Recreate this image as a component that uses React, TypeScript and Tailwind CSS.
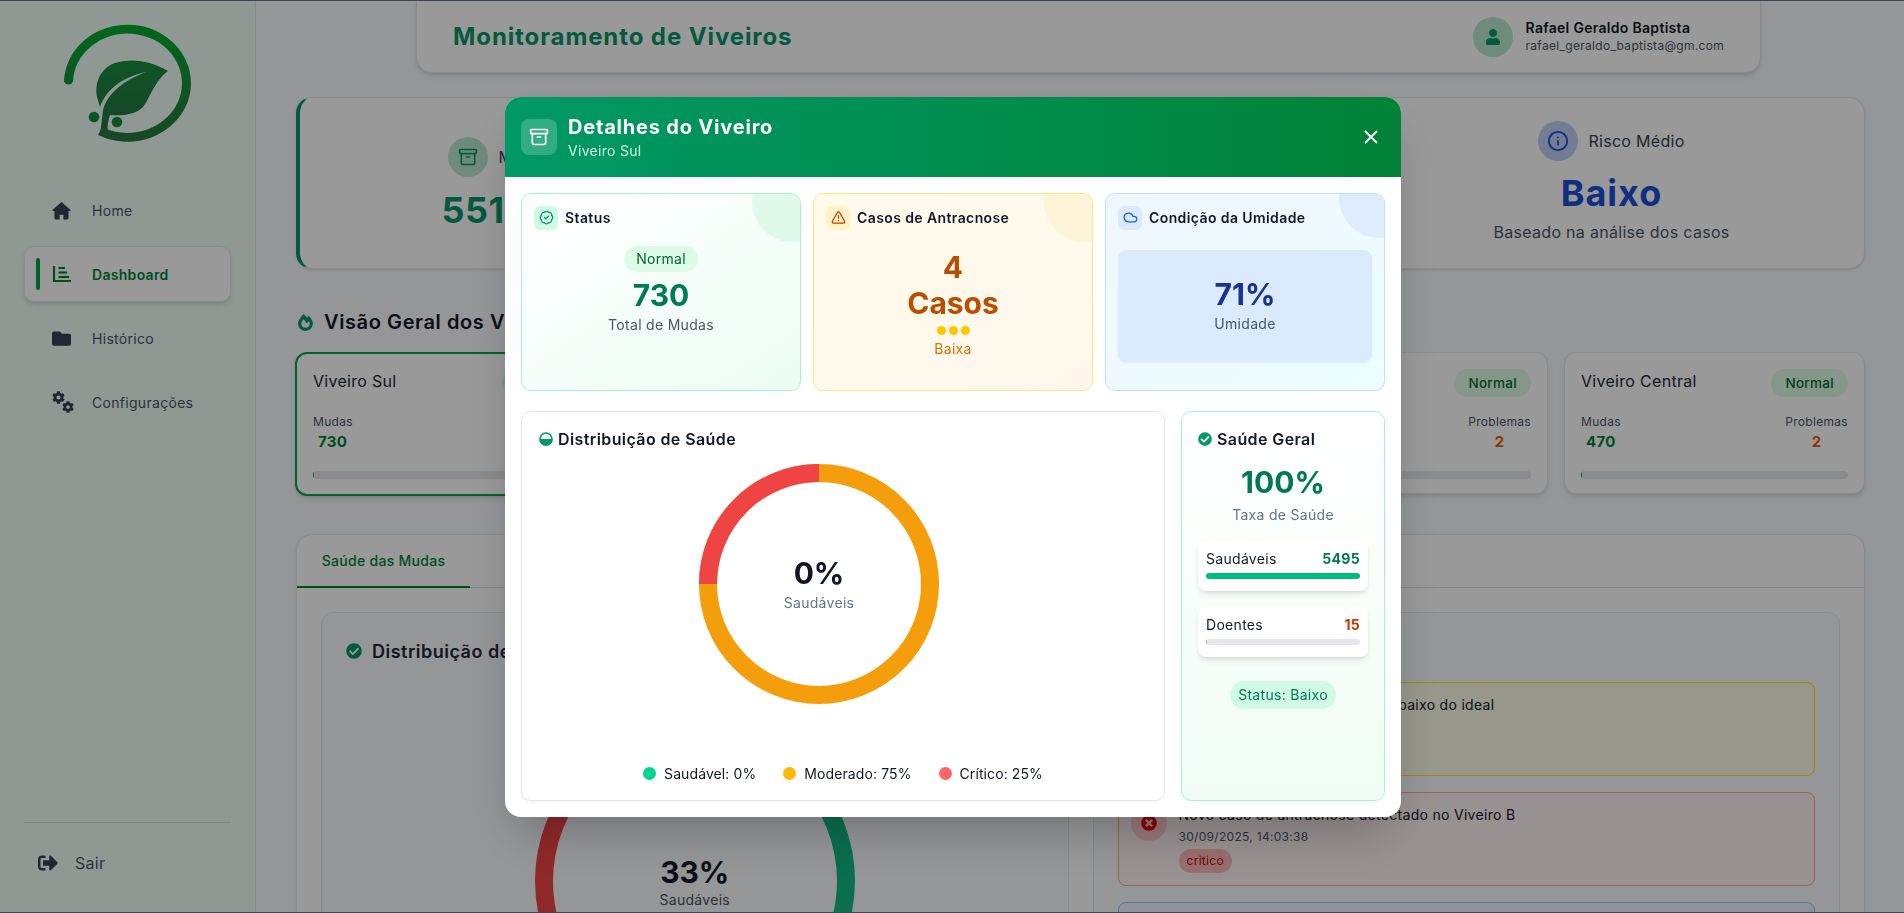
import React from "react";
import { Archive, BadgeCheck, TriangleAlert, Cloud, X, Info } from "lucide-react";
import { FaFolder, FaCog, FaSignOutAlt, FaUser, FaFireAlt, FaCheckCircle, FaTimesCircle } from "react-icons/fa";

function Logo() {
  return (
    <svg width="135" height="125" viewBox="60 22 135 125">
      <defs>
        <linearGradient id="lg" gradientUnits="userSpaceOnUse" x1="127" y1="22" x2="127" y2="145">
          <stop offset="0" stopColor="#00ad2f" />
          <stop offset="1" stopColor="#2a7543" />
        </linearGradient>
        <linearGradient id="lf" gradientUnits="userSpaceOnUse" x1="127" y1="60" x2="127" y2="140">
          <stop offset="0" stopColor="#1a8c41" />
          <stop offset="1" stopColor="#257244" />
        </linearGradient>
      </defs>
      <path d="M68.5 82 A59 54 0 1 1 100 131" fill="none" stroke="url(#lg)" strokeWidth="9" />
      <circle cx="68.5" cy="80" r="4.5" fill="#0a9a36" />
      <path d="M168 71 C150 60 130 58 115 63 C100 68 93 85 98 100 L100 107 C106 90 122 77 146 72 C125 80 108 92 103 110 L100 135 L108 133 C107 127 108 120 110 115 C122 116 135 115 143 107 C150 98 155 80 168 71 Z" fill="url(#lf)" />
      <circle cx="94" cy="117" r="5.3" fill="#118a3c" />
      <circle cx="117" cy="122" r="5.3" fill="#118a3c" />
    </svg>
  );
}

function HomeIcon() {
  return (
    <svg width="19" height="19" viewBox="0 0 20 20" fill="currentColor">
      <path d="M10 1 L19.5 9.6 Q19.8 10.6 18.6 10.6 L17.4 10.6 L17.4 18 Q17.4 19.5 16 19.5 L12 19.5 L12 14.5 L8 14.5 L8 19.5 L4 19.5 Q2.6 19.5 2.6 18 L2.6 10.6 L1.4 10.6 Q0.2 10.6 0.5 9.6 Z" />
    </svg>
  );
}

function ChartIcon() {
  return (
    <svg width="20" height="18" viewBox="0 0 20 18" fill="none" stroke="currentColor" strokeWidth="2.2">
      <path d="M2 1 V16 H19" />
      <path d="M6.5 3 H13" />
      <path d="M6.5 7.5 H15" />
      <path d="M6.5 12 H17" />
    </svg>
  );
}

function GearsIcon() {
  return (
    <svg width="23" height="22" viewBox="0 0 23 22" fill="currentColor">
      <FaCog x={0} y={0} size={13} />
      <FaCog x={10} y={10} size={12} />
    </svg>
  );
}

function NavItem({ icon, label, active }: { icon: React.ReactNode; label: string; active?: boolean }) {
  return (
    <div className={active ? "flex h-[56px] items-center rounded-[10px] border border-gray-200 bg-white/90 pl-[11px] shadow-md" : "flex h-[56px] items-center pl-[12px]"}>
      <div className={active ? "h-[32px] w-[4px] rounded-full bg-[#00a63e]" : "h-[32px] w-[4px]"} />
      <div className={active ? "ml-[12px] flex w-[40px] items-center text-[#008236]" : "ml-[12px] flex w-[40px] items-center text-[#364153]"}>{icon}</div>
      <span className={active ? "text-[14px] font-semibold text-[#008236]" : "text-[14px] text-[#4a5565]"}>{label}</span>
    </div>
  );
}

function ViveiroCard({ name, mudas, problemas, selected }: { name: string; mudas: number; problemas: number; selected?: boolean }) {
  return (
    <div className={selected ? "-ml-[1px] h-[144px] rounded-xl border-2 border-[#00a63e] bg-white pl-[16px] pr-[16px] pt-[15px] shadow-md" : "h-[142px] rounded-xl border border-gray-200 bg-white px-[16px] pt-[16px] shadow-md"}>
      <div className="flex items-start justify-between">
        <span className="text-[16px] leading-[24px] text-[#1e2939]">{name}</span>
        <span className="flex h-[28px] items-center rounded-full bg-[#dcfce7] px-[14px] text-[13.5px] font-medium text-[#016630]">Normal</span>
      </div>
      <div className="mt-[17px] flex justify-between">
        <div>
          <div className="text-[12px] leading-[16px] text-[#4a5565]">Mudas</div>
          <div className="pl-[5px] text-[15px] font-bold leading-[23px] text-[#008236]">{mudas}</div>
        </div>
        <div className="text-center">
          <div className="text-[12px] leading-[16px] text-[#4a5565]">Problemas</div>
          <div className="text-[15px] font-bold leading-[23px] text-[#ea580c]">{problemas}</div>
        </div>
      </div>
      <div className="mt-[18px] h-[8px] overflow-hidden rounded-full bg-[#e5e7eb]">
        <div className="h-full w-[1px] bg-[#00a63e]" />
      </div>
    </div>
  );
}

function Alert({ wrap, circle, inner, title, date, tag, tagClass }: { wrap: string; circle: string; inner: React.ReactNode; title: string; date: string; tag: string; tagClass: string }) {
  return (
    <div className={"flex h-[94px] shrink-0 gap-[12px] rounded-lg border px-[12px] pt-[12px] " + wrap}>
      <div className={"flex h-[36px] w-[36px] shrink-0 items-center justify-center rounded-full " + circle}>{inner}</div>
      <div>
        <div className="text-[14px] leading-[20px] text-[#101828]">{title}</div>
        <div className="mt-[2px] text-[12px] leading-[20px] text-[#4a5565]">{date}</div>
        <span className={"mt-[2px] inline-flex h-[24px] items-center rounded-full px-[8px] text-[12px] " + tagClass}>{tag}</span>
      </div>
    </div>
  );
}

function Background() {
  return (
    <div className="flex h-[913px] w-full overflow-hidden bg-[#f8fafc]">
      <aside className="flex h-full w-[256px] shrink-0 flex-col border-r border-gray-200 bg-[#effdf4]">
        <div className="flex justify-center pt-[22px]"><Logo /></div>
        <nav className="mt-[35px] flex flex-col gap-[8px] px-[24px]">
          <NavItem icon={<HomeIcon />} label="Home" />
          <NavItem active icon={<ChartIcon />} label="Dashboard" />
          <NavItem icon={<FaFolder size={19} />} label="Histórico" />
          <NavItem icon={<GearsIcon />} label="Configurações" />
        </nav>
        <div className="mx-[24px] mb-[38px] mt-auto border-t border-gray-300 pt-[28px]">
          <div className="flex items-center pl-[14px] text-[#364153]">
            <FaSignOutAlt size={20} />
            <span className="ml-[17px] text-[16px] leading-[24px] text-[#4a5565]">Sair</span>
          </div>
        </div>
      </aside>

      <main className="min-w-0 flex-1 pl-[40px] pr-[39px]">
        <header className="ml-[120px] mr-[104px] flex h-[73px] items-center justify-between rounded-b-2xl border border-t-0 border-gray-200 bg-white pl-[36px] pr-[36px] pt-[2px] shadow-md">
          <h1 className="text-[24px] font-bold tracking-[0.9px] text-[#059669]">Monitoramento de Viveiros</h1>
          <div className="flex items-center gap-[13px]">
            <div className="flex h-[40px] w-[40px] items-center justify-center rounded-full bg-[#b9e8d3] text-[#059669]"><FaUser size={16} /></div>
            <div>
              <div className="text-[14px] font-semibold leading-[18px] text-[#111827]">Rafael Geraldo Baptista</div>
              <div className="text-[12px] leading-[18px] text-[#4b5563]">rafael_geraldo_baptista@gm.com</div>
            </div>
          </div>
        </header>

        <section className="mt-[24px] grid h-[172px] grid-cols-3 gap-[24px]">
          <div className="flex flex-col items-center rounded-2xl border border-gray-200 border-l-4 border-l-[#059669] bg-white pt-[39px] shadow-sm">
            <div className="flex items-center gap-[10px]">
              <div className="flex h-[40px] w-[40px] items-center justify-center rounded-full bg-[#b9e8d3] text-[#059669]"><Archive size={20} /></div>
              <span className="text-[16px] text-[#364153]">Mudas Monitoradas</span>
            </div>
            <div className="mt-[8px] text-[36px] font-bold leading-[50px] tracking-[0.5px] text-[#059669]">5510 Mudas</div>
          </div>
          <div className="rounded-2xl border border-gray-200 bg-white shadow-sm" />
          <div className="flex flex-col items-center rounded-2xl border border-gray-200 bg-white pt-[23px] shadow-sm">
            <div className="flex items-center gap-[10px]">
              <div className="flex h-[40px] w-[40px] items-center justify-center rounded-full bg-[#bfd1f5] text-[#1d4ed8]"><Info size={22} /></div>
              <span className="text-[16px] text-[#364153]">Risco Médio</span>
            </div>
            <div className="mt-[7px] text-[36px] font-bold leading-[50px] tracking-[1px] text-[#1d4ed8]">Baixo</div>
            <div className="mt-[2px] text-[16px] leading-[24px] text-[#4a5565]">Baseado na análise dos casos</div>
          </div>
        </section>

        <h2 className="mt-[39px] flex h-[28px] items-center gap-[10px] pl-[1px] text-[20px] font-semibold tracking-[0.6px] text-[#101828]">
          <FaFireAlt size={17} className="text-[#059669]" /> Visão Geral dos Viveiros
        </h2>

        <section className="mt-[16px] grid grid-cols-5 gap-[16px]">
          <ViveiroCard selected name="Viveiro Sul" mudas={730} problemas={4} />
          <ViveiroCard name="Viveiro Norte" mudas={1520} problemas={3} />
          <ViveiroCard name="Viveiro Leste" mudas={1300} problemas={4} />
          <ViveiroCard name="Viveiro Oeste" mudas={1490} problemas={2} />
          <ViveiroCard name="Viveiro Central" mudas={470} problemas={2} />
        </section>

        <section className="mt-[38px] rounded-2xl border border-gray-200 bg-white shadow-sm">
          <div className="flex h-[53px] border-b border-gray-300">
            <div className="flex h-[53px] w-[173px] items-center justify-center border-b-2 border-[#008236] text-[14px] font-medium text-[#008236]">Saúde das Mudas</div>
          </div>
          <div className="grid grid-cols-2 gap-[24px] p-[24px]">
            <div className="rounded-xl border border-gray-200 bg-[#f8fafc] p-[24px]">
              <div className="flex h-[28px] items-center gap-[10px] text-[18px] font-semibold tracking-[0.5px] text-[#1e2939]">
                <FaCheckCircle size={16} className="text-[#059669]" /> Distribuição de Saúde
              </div>
              <div className="mt-[56px] flex justify-center">
                <div className="relative h-[320px] w-[320px] shrink-0">
                  <svg width="320" height="320" viewBox="0 0 320 320">
                    <path d="M160 9 A151 151 0 0 1 160 311" fill="none" stroke="#10b981" strokeWidth="18" />
                    <path d="M160 311 A151 151 0 0 1 160 9" fill="none" stroke="#ef4444" strokeWidth="18" />
                  </svg>
                  <div className="absolute inset-0 flex flex-col items-center justify-center pt-[1px]">
                    <div className="text-[30px] font-bold leading-[36px] tracking-normal text-[#101828]">33%</div>
                    <div className="text-[14px] leading-[20px] text-[#4a5565]">Saudáveis</div>
                  </div>
                </div>
              </div>
            </div>
            <div className="flex flex-col gap-[16px] rounded-xl border border-gray-200 bg-[#f8fafc] p-[24px]">
              <div className="h-[29px] text-[18px] font-semibold text-[#1e2939]">Alertas Recentes</div>
              <Alert wrap="border-[#ffdf20] bg-[#fefce8]" circle="bg-[#fef9c2]" inner={<TriangleAlert size={14} className="text-[#d08700]" />} title="Nível de umidade no Viveiro A abaixo do ideal" date="30/09/2025, 14:03:38" tag="alerta" tagClass="bg-[#fef9c2] text-[#a65f00]" />
              <Alert wrap="border-[#ffa2a2] bg-[#fef2f2]" circle="bg-[#ffc9c9]" inner={<FaTimesCircle size={16} className="text-[#e7000b]" />} title="Novo caso de antracnose detectado no Viveiro B" date="30/09/2025, 14:03:38" tag="critico" tagClass="bg-[#ffb8b8] text-[#c10007]" />
              <Alert wrap="border-[#8ec5ff] bg-[#eff6ff]" circle="bg-[#dbeafe]" inner={<Info size={14} className="text-[#155dfc]" />} title="Atualização" date="30/09/2025, 14:03:38" tag="info" tagClass="bg-[#dbeafe] text-[#1447e6]" />
            </div>
          </div>
        </section>
      </main>
    </div>
  );
}

function Card({ wrap, blob, iconBg, icon, title, children }: { wrap: string; blob: string; iconBg: string; icon: React.ReactNode; title: string; children: React.ReactNode }) {
  return (
    <div className={"relative h-[198px] overflow-hidden rounded-[10px] border p-[12px] " + wrap}>
      <div className={"absolute h-[80px] w-[80px] rounded-full " + blob} />
      <div className="relative flex h-[24px] items-center gap-[7px]">
        <div className={"flex h-[24px] w-[24px] items-center justify-center rounded-md " + iconBg}>{icon}</div>
        <span className="text-[14px] font-semibold tracking-[0.4px] text-[#101828]">{title}</span>
      </div>
      {children}
    </div>
  );
}

function Modal() {
  return (
    <div className="fixed inset-0 flex items-center justify-center border-y border-[#3b4450] bg-black/40 pl-[2px]">
      <div className="h-[720px] w-[896px] overflow-hidden rounded-2xl bg-white shadow-2xl">
        <div className="flex h-[80px] items-center justify-between bg-gradient-to-r from-[#009966] to-[#008236] pl-[16px] pr-[19px]">
          <div className="flex items-center gap-[11px]">
            <div className="flex h-[36px] w-[36px] items-center justify-center rounded-lg bg-white/20 text-white"><Archive size={20} /></div>
            <div>
              <div className="text-[20px] font-bold leading-[28px] tracking-[0.8px] text-white">Detalhes do Viveiro</div>
              <div className="text-[14px] leading-[20px] text-[#d1fae5]">Viveiro Sul</div>
            </div>
          </div>
          <X size={22} className="text-white" />
        </div>
        <div className="p-[16px]">
          <div className="grid grid-cols-3 gap-[12px]">
            <Card wrap="border-[#a4f4cf] bg-gradient-to-br from-white to-[#ecfdf5]" blob="-right-[32px] -top-[32px] bg-[#dff9ea]" iconBg="bg-[#d0fae5]" icon={<BadgeCheck size={15} className="text-[#059669]" />} title="Status">
              <div className="mt-[16px] flex flex-col items-center">
                <span className="flex h-[26px] items-center rounded-full bg-[#dcfce7] px-[12px] text-[14px] text-[#016630]">Normal</span>
                <div className="mt-[3px] text-[30px] font-bold leading-[40px] tracking-normal text-[#007a55]">730</div>
                <div className="text-[14px] leading-[20px] text-[#4a5565]">Total de Mudas</div>
              </div>
            </Card>
            <Card wrap="border-[#fee685] bg-gradient-to-br from-[#fffbeb] to-[#fff7ed]" blob="-right-[32px] -top-[32px] bg-[#fef4d7]" iconBg="bg-[#fef3c6]" icon={<TriangleAlert size={15} className="text-[#ca3500]" />} title="Casos de Antracnose">
              <div className="mt-[19px] flex flex-col items-center">
                <div className="text-center text-[30px] font-bold leading-[36px] tracking-normal text-[#bb4d00]">4<br />Casos</div>
                <div className="mt-[5px] flex gap-[3px]">
                  <span className="h-[9px] w-[9px] rounded-full bg-[#fdc700]" />
                  <span className="h-[9px] w-[9px] rounded-full bg-[#fdc700]" />
                  <span className="h-[9px] w-[9px] rounded-full bg-[#fdc700]" />
                </div>
                <div className="mt-[4px] text-[14px] leading-[20px] text-[#e17100]">Baixa</div>
              </div>
            </Card>
            <Card wrap="border-[#bedbff] bg-gradient-to-br from-[#eff6ff] to-[#ecfeff]" blob="-right-[35px] -top-[36px] bg-[#deecfd]" iconBg="bg-[#dbeafe]" icon={<Cloud size={15} className="text-[#155dfc]" />} title="Condição da Umidade">
              <div className="relative mt-[20px] flex h-[112px] flex-col items-center justify-center rounded-lg bg-[#dbeafe] pb-[3px] shadow-xs">
                <div className="text-[30px] font-bold leading-[40px] tracking-normal text-[#193393]">71%</div>
                <div className="text-[14px] leading-[20px] text-[#4a5565]">Umidade</div>
              </div>
            </Card>
          </div>

          <div className="mt-[20px] grid grid-cols-4 gap-[16px]">
            <div className="col-span-3 flex h-[390px] flex-col rounded-[10px] border border-gray-200 bg-white px-[17px] pt-[15px] shadow-xs">
              <div className="flex h-[24px] items-center gap-[5px] text-[16px] font-semibold tracking-[0.4px] text-[#101828]">
                <svg width="14" height="14" viewBox="0 0 14 14"><circle cx="7" cy="7" r="6" fill="#fff" stroke="#059669" strokeWidth="1.6" /><path d="M0.3 7 H13.7 A6.7 6.7 0 0 1 0.3 7Z" fill="#059669" /></svg>
                Distribuição de Saúde
              </div>
              <div className="mt-[13px] flex justify-center pr-[48px]">
                <div className="relative h-[240px] w-[240px]">
                  <svg width="240" height="240" viewBox="0 0 240 240">
                    <circle cx="120" cy="120" r="111" fill="none" stroke="#f59e0b" strokeWidth="18" />
                    <path d="M9 120 A111 111 0 0 1 120 9" fill="none" stroke="#ef4444" strokeWidth="18" />
                  </svg>
                  <div className="absolute inset-0 flex flex-col items-center justify-center">
                    <div className="text-[30px] font-bold leading-[36px] tracking-normal text-[#101828]">0%</div>
                    <div className="mt-[2px] text-[14px] leading-[20px] text-[#62748e]">Saudáveis</div>
                  </div>
                </div>
              </div>
              <div className="mt-[59px] flex items-center justify-center gap-[27px] text-[14px] tracking-[0.1px] text-[#101828]">
                <span className="flex items-center gap-[8px]"><span className="h-[13px] w-[13px] rounded-full bg-[#00d492]" />Saudável: 0%</span>
                <span className="flex items-center gap-[8px]"><span className="h-[13px] w-[13px] rounded-full bg-[#ffb900]" />Moderado: 75%</span>
                <span className="flex items-center gap-[8px]"><span className="h-[13px] w-[13px] rounded-full bg-[#ff6467]" />Crítico: 25%</span>
              </div>
            </div>

            <div className="flex h-[390px] flex-col items-stretch rounded-[10px] border border-[#a4f4cf] bg-gradient-to-b from-white to-[#f0fdf4] px-[16px] pt-[15px]">
              <div className="flex h-[24px] items-center gap-[5px] text-[16px] font-semibold tracking-[0.4px] text-[#101828]">
                <FaCheckCircle size={14} className="text-[#059669]" /> Saúde Geral
              </div>
              <div className="mt-[11px] text-center text-[30px] font-bold leading-[40px] tracking-normal text-[#007a55]">100%</div>
              <div className="mt-[3px] text-center text-[14px] leading-[20px] text-[#62748e]">Taxa de Saúde</div>
              <div className="mt-[16px] h-[50px] rounded-lg bg-white px-[8px] pt-[8px] shadow-md">
                <div className="flex justify-between text-[14px] leading-[20px] text-[#101828]"><span>Saudáveis</span><span className="font-bold text-[#007a55]">5495</span></div>
                <div className="mt-[4px] h-[6px] rounded-full bg-[#00bc7d]" />
              </div>
              <div className="mt-[16px] h-[50px] rounded-lg bg-white px-[8px] pt-[8px] shadow-md">
                <div className="flex justify-between text-[14px] leading-[20px] text-[#101828]"><span>Doentes</span><span className="font-bold text-[#ca3500]">15</span></div>
                <div className="mt-[4px] h-[6px] overflow-hidden rounded-full bg-[#e5e7eb]"><div className="h-full w-[1px] bg-[#fe9a00]" /></div>
              </div>
              <div className="mt-[24px] flex justify-center">
                <span className="flex h-[28px] items-center rounded-full bg-[#d0fae5] px-[8px] text-[14px] text-[#007a55]">Status: Baixo</span>
              </div>
            </div>
          </div>
        </div>
      </div>
    </div>
  );
}

export default function App() {
  return (
    <div className="relative h-[913px] w-full overflow-hidden font-['Inter','Noto_Sans',sans-serif] tracking-[0.3px]">
      <Background />
      <Modal />
    </div>
  );
}
